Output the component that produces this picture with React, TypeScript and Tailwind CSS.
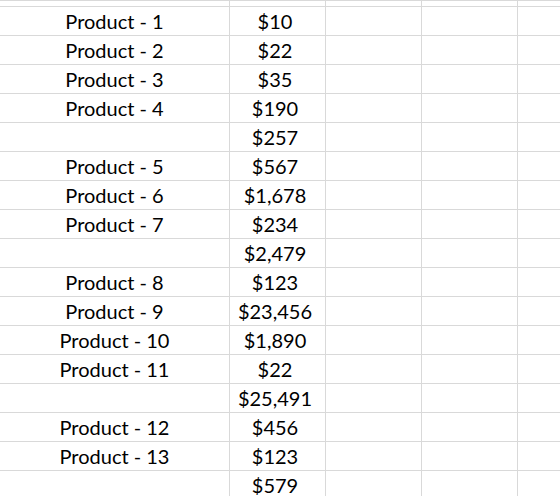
const rows: [string, string][] = [
  ["Product - 1", "$10"],
  ["Product - 2", "$22"],
  ["Product - 3", "$35"],
  ["Product - 4", "$190"],
  ["", "$257"],
  ["Product - 5", "$567"],
  ["Product - 6", "$1,678"],
  ["Product - 7", "$234"],
  ["", "$2,479"],
  ["Product - 8", "$123"],
  ["Product - 9", "$23,456"],
  ["Product - 10", "$1,890"],
  ["Product - 11", "$22"],
  ["", "$25,491"],
  ["Product - 12", "$456"],
  ["Product - 13", "$123"],
  ["", "$579"],
];

function Cell({ children, className = "" }: { children?: React.ReactNode; className?: string }) {
  return (
    <div className={`flex items-end justify-center border-r border-[#d9d9d9] pb-[2px] ${className}`}>
      {children}
    </div>
  );
}

export default function App() {
  return (
    <div className="w-[560px] h-[496px] overflow-hidden bg-white text-black font-['Lato',sans-serif] text-[20px] leading-[24px]">
      <div className="border-t border-[#d9d9d9]">
        <div className="flex h-[6px] border-b border-[#d9d9d9]">
          <Cell className="w-[230px] shrink-0" />
          <Cell className="w-[96px] shrink-0" />
          <Cell className="w-[96px] shrink-0" />
          <Cell className="w-[96px] shrink-0" />
          <div className="flex-1" />
        </div>
        {rows.map(([name, price], i) => (
          <div key={i} className="flex h-[29px] border-b border-[#d9d9d9]">
            <Cell className="w-[230px] shrink-0">{name}</Cell>
            <Cell className="w-[96px] shrink-0 pr-[5px]">{price}</Cell>
            <Cell className="w-[96px] shrink-0" />
            <Cell className="w-[96px] shrink-0" />
            <div className="flex-1" />
          </div>
        ))}
      </div>
    </div>
  );
}
